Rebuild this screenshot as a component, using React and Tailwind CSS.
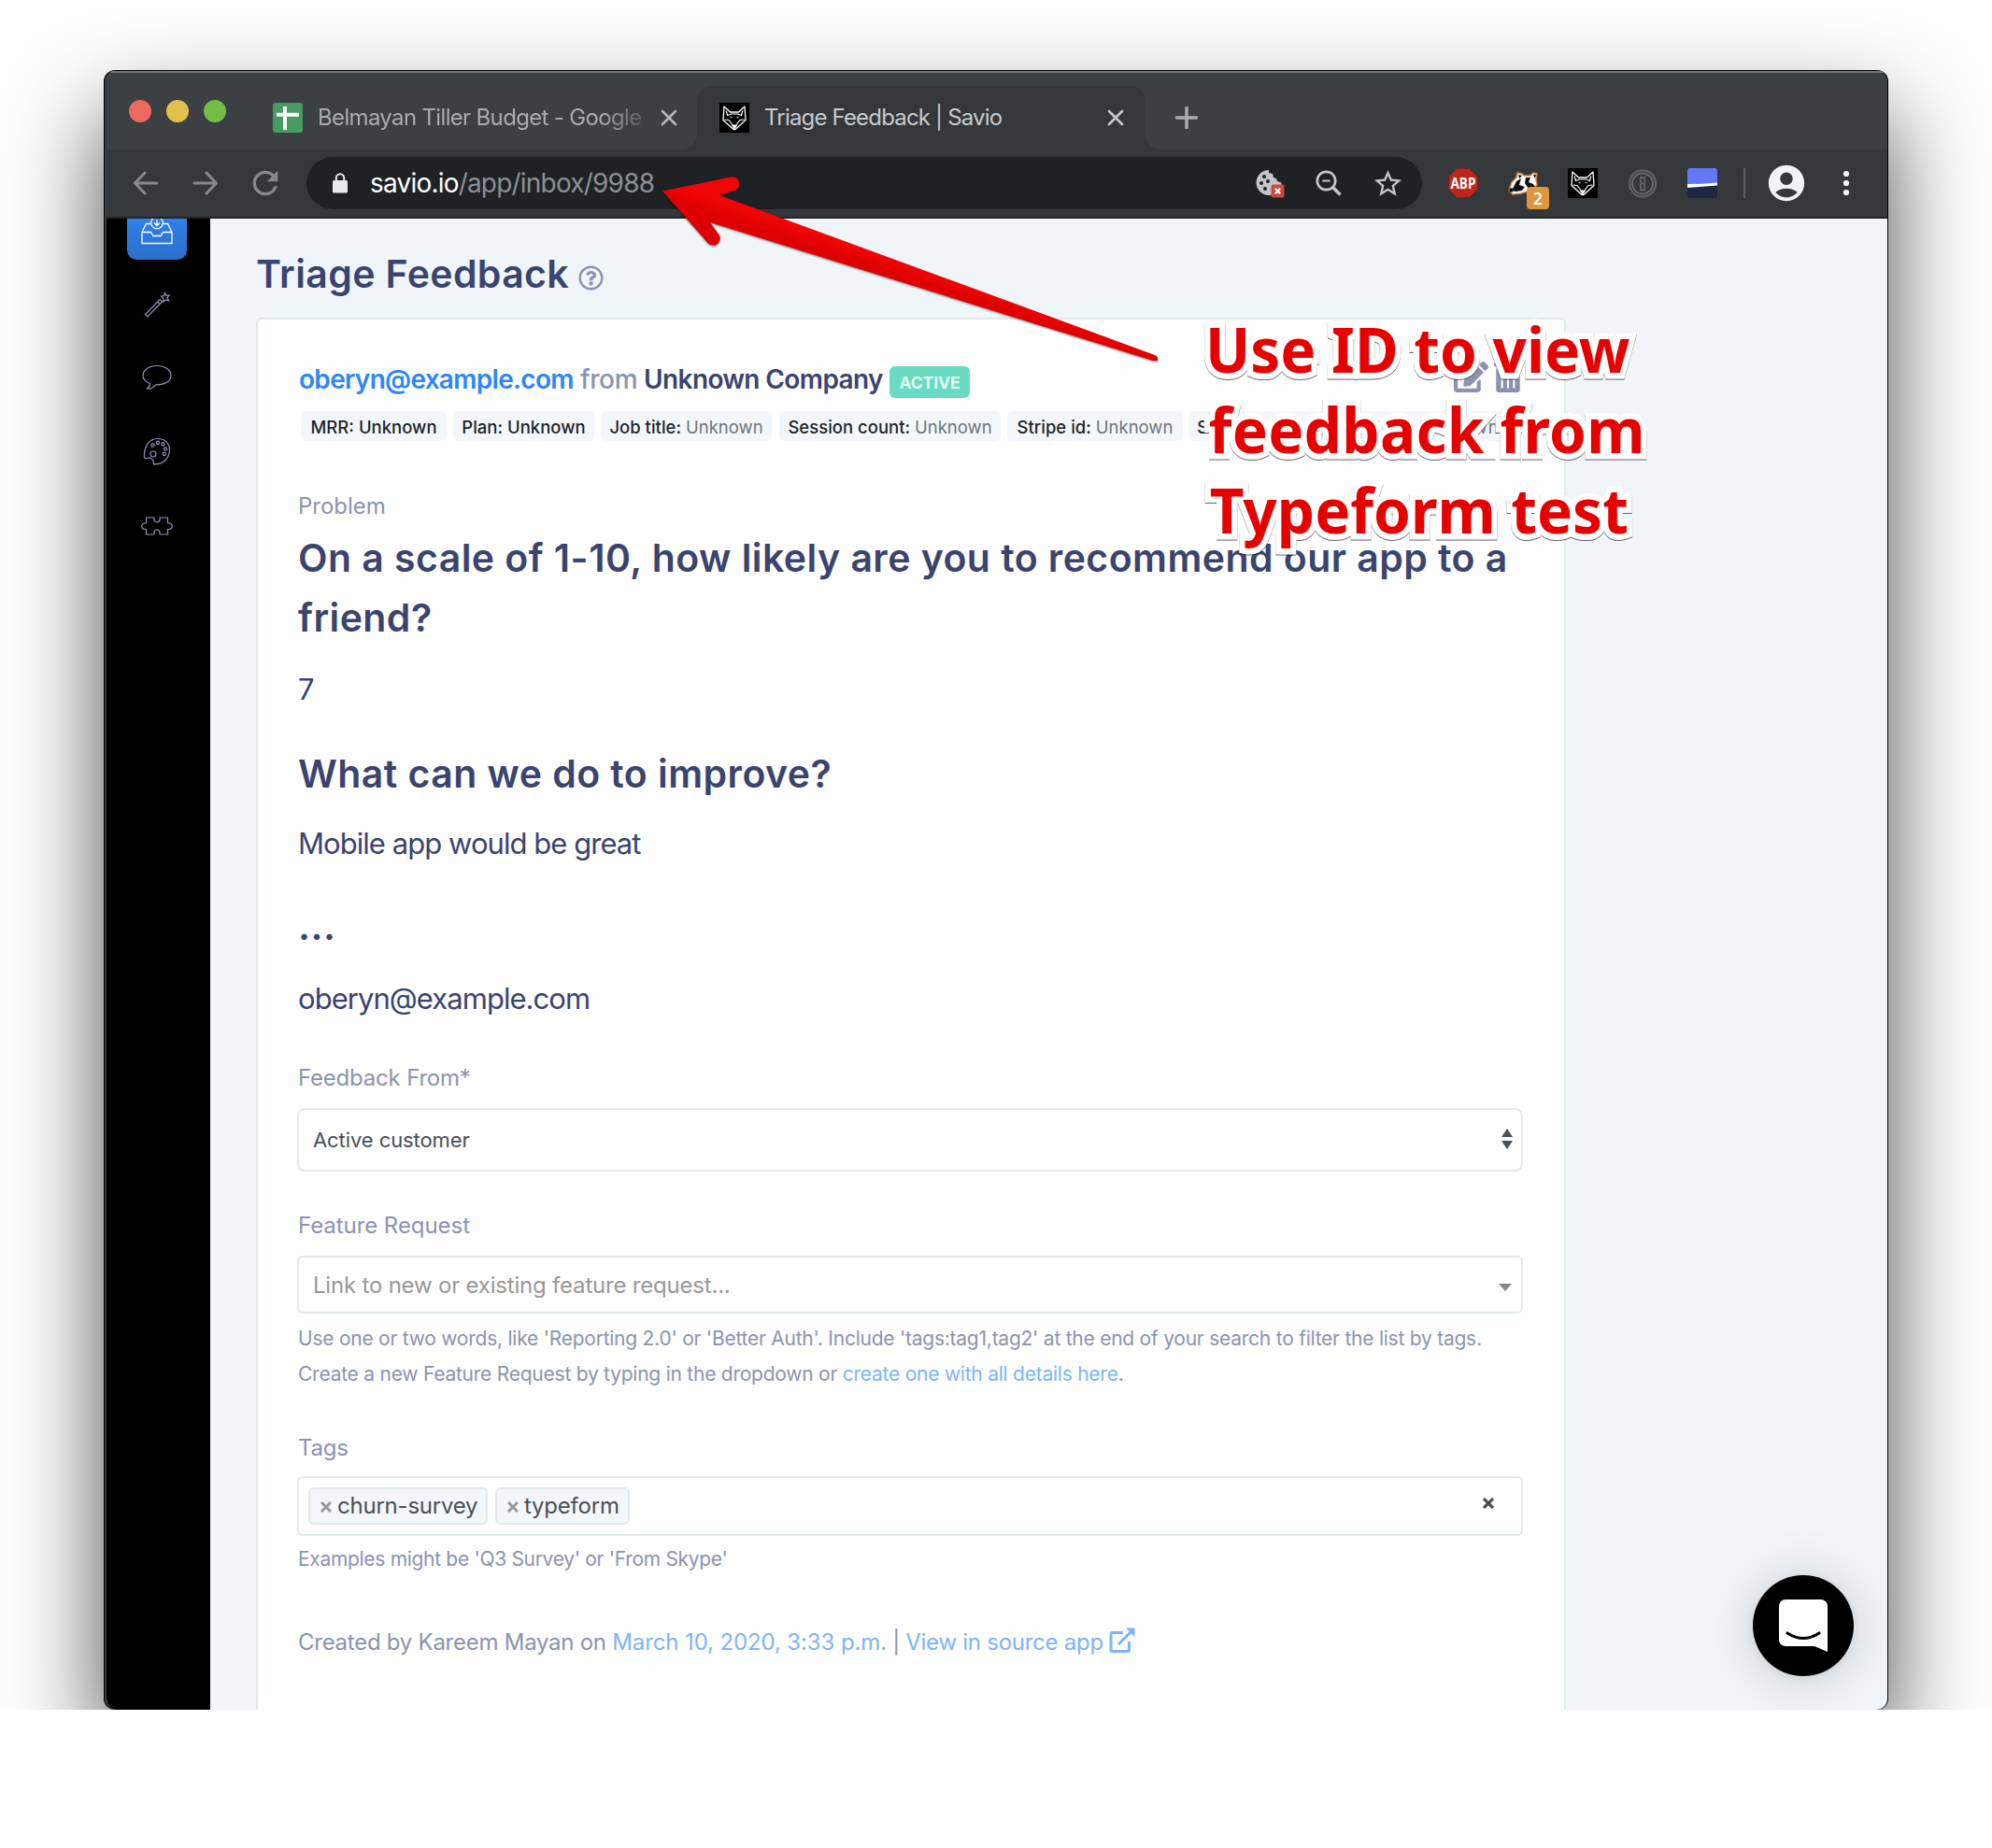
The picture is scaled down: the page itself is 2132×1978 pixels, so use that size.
import React from 'react';
import { MdRefresh, MdStarBorder, MdAccountCircle } from 'react-icons/md';
import { FaRegQuestionCircle, FaEdit, FaTrashAlt } from 'react-icons/fa';

function Fox({ className }) {
  return (
    <svg className={className} viewBox="0 0 32 32">
      <rect width="32" height="32" fill="#000" />
      <path d="M5 4 L11.500 10 H20.500 L27 4 L28 18.500 L17 28.500 H15 L4 18.500 Z" fill="none" stroke="#fff" strokeWidth="1.300" strokeLinejoin="round" />
      <path d="M7.200 8.500 L8.500 13.500 L12.500 12 H19.500 L23.500 13.500 L24.800 8.500 M5.500 18 L10 18.500 L14 23.500 M26.500 18 L22 18.500 L18 23.500" fill="none" stroke="#fff" strokeWidth="1.200" />
      <path d="M12.500 23.500 h7 L16 28.800 Z" fill="#fff" />
      <path d="M11.500 15.500 h2 M18.500 15.500 h2" stroke="#bbb" strokeWidth="1.500" />
    </svg>
  );
}

function CloseX({ className }) {
  return (
    <svg className={className} viewBox="0 0 18 18" fill="none" stroke="currentColor" strokeWidth="2.600" strokeLinecap="round">
      <path d="M2 2 L16 16 M16 2 L2 16" />
    </svg>
  );
}

function TabStrip() {
  return (
    <div className="flex h-[85px] shrink-0 items-end bg-[#3c4043] shadow-[inset_0_1px_0_#000,inset_0_3px_0_#70767a]">
      <div className="ml-[24px] mb-[29px] flex gap-4">
        <div className="size-6 rounded-full bg-[#ed6a5e]" />
        <div className="size-6 rounded-full bg-[#e1c04c]" />
        <div className="size-6 rounded-full bg-[#72be47]" />
      </div>
      <div className="ml-[50px] flex h-[68px] w-[454px] items-center">
        <svg className="size-8" viewBox="0 0 32 32">
          <rect width="32" height="32" rx="3" fill="#469b60" />
          <path d="M13 4 v25 M4 12.800 h24" stroke="#fff" strokeWidth="4" />
        </svg>
        <div className="ml-[16px] w-[352px] whitespace-nowrap text-[24px] tracking-[-0.660px] text-[#a9acae] [mask-image:linear-gradient(to_right,#000_86%,rgba(0,0,0,0.25)_99%)]">Belmayan Tiller Budget - Google</div>
        <CloseX className="ml-[15px] size-[18px] text-[#b4b8ba]" />
      </div>
      <div className="relative flex h-[68px] w-[480px] items-center rounded-t-2xl bg-[#35383b]">
        <div className="absolute -left-4 bottom-0 size-4 bg-[radial-gradient(circle_at_0_0,transparent_15.500px,#35383b_16px)]" />
        <div className="absolute -right-4 bottom-0 size-4 bg-[radial-gradient(circle_at_100%_0,transparent_15.500px,#35383b_16px)]" />
        <Fox className="ml-6 size-8" />
        <div className="ml-[16px] w-[367px] whitespace-nowrap text-[24px] tracking-[-0.820px] text-[#c8cacc]">Triage Feedback | Savio</div>
        <CloseX className="size-[18px] text-[#c6c9cb]" />
      </div>
      <svg className="mb-[22px] ml-[32px] size-6" viewBox="0 0 24 24" stroke="#aaaeb1" strokeWidth="3.400" strokeLinecap="round">
        <path d="M12 1.500 V22.500 M1.500 12 H22.500" />
      </svg>
    </div>
  );
}

function Toolbar() {
  return (
    <div className="flex h-[74px] shrink-0 items-center border-b-2 border-[#222427] bg-[#35383b]">
      <svg className="ml-[28px] h-[26px] w-[28px]" viewBox="0 0 28 26" fill="none" stroke="#85898b" strokeWidth="3" strokeLinecap="round" strokeLinejoin="round">
        <path d="M26 13 H3 M13 2 L2.500 13 L13 24" />
      </svg>
      <svg className="ml-[36px] h-[26px] w-[28px]" viewBox="0 0 28 26" fill="none" stroke="#85898b" strokeWidth="3" strokeLinecap="round" strokeLinejoin="round">
        <path d="M2 13 H25 M15 2 L25.500 13 L15 24" />
      </svg>
      <MdRefresh className="ml-[30px] size-[40px] text-[#85898b]" />
      <div className="ml-[24px] flex h-14 w-[1194px] items-center rounded-full bg-[#1f2225]">
        <svg className="ml-[28px] h-[22px] w-4" viewBox="0 0 16 22">
          <rect y="8" width="16" height="13.500" rx="1.500" fill="#e8eaed" />
          <path d="M3.800 9 V5.500 a4.200 4.200 0 0 1 8.400 0 V9" fill="none" stroke="#e8eaed" strokeWidth="2" />
        </svg>
        <div className="ml-[24px] w-[939px] whitespace-nowrap text-[28px] tracking-[-0.800px] text-[#8d9092]"><span className="text-white">savio.io</span>/app/inbox/9988</div>
        <svg className="ml-[9px] size-8" viewBox="0 0 32 32">
          <path d="M14 2 A13.500 13.500 0 1 0 27.500 15.500 L23 14 L22 11 L19 10 L18 6 L14 5 Z" fill="#c3c5c7" />
          <g fill="#1f2225"><circle cx="9" cy="9" r="2" /><circle cx="6" cy="16" r="2" /><circle cx="13" cy="14" r="2" /><circle cx="10" cy="22" r="2" /></g>
          <rect x="16.500" y="17.500" width="14" height="14" rx="2" fill="#c9493f" />
          <path d="M20.800 21.800 l5.400 5.400 m0 -5.400 l-5.400 5.400" stroke="#fff" strokeWidth="2" />
        </svg>
        <svg className="ml-[32px] size-[28px]" viewBox="0 0 28 28" fill="none" stroke="#c3c5c7" strokeWidth="2.700">
          <circle cx="11.500" cy="11.500" r="9.700" />
          <path d="M18.300 18.300 L26.500 26.500" strokeWidth="3.400" />
          <path d="M7.300 11.500 h8.400" strokeWidth="2" />
        </svg>
        <MdStarBorder className="ml-[32px] size-[35px] text-[#c3c5c7]" />
      </div>
      <div className="flex items-center">
        <svg className="ml-7 size-8" viewBox="0 0 32 32">
          <path d="M9.500 0.500 h13 l9 9 v13 l-9 9 h-13 l-9 -9 v-13 z" fill="#bb281b" stroke="#8a1d14" />
          <text x="16" y="21.500" textAnchor="middle" fontSize="15.500" fontWeight="700" fontFamily="Open Sans, sans-serif" fill="#fff" textLength="27" lengthAdjust="spacingAndGlyphs">ABP</text>
        </svg>
        <div className="relative ml-8 size-8">
          <svg className="size-8" viewBox="0 0 32 32" strokeLinejoin="round">
            <path d="M1 24 L4 15 L9 10 L10 5 L15 6 L17 8 H24 L27 5 L31 6 L30 12 L31 18 L24 24 L14 27 L5 28 Z" fill="#fff" stroke="#d98443" strokeWidth="1.500" />
            <path d="M4 24 L9 14 L14 11 L12 18 L18 20 L15 24 L8 25 Z M11 7 l4 1 -3 3z M19 10 H24 L22 15 L27 17 L29 20 L22 22 L18 16 Z M27 7 l3 0 -1 4z" fill="#111" />
            <circle cx="3.500" cy="23.500" r="2.200" fill="#111" />
          </svg>
          <div className="absolute left-5 top-5 flex size-6 items-center justify-center rounded-[4px] bg-[#de9641] font-['Open_Sans',sans-serif] text-[18px] font-semibold leading-none text-white">2</div>
        </div>
        <Fox className="ml-8 size-8" />
        <svg className="ml-8 size-8" viewBox="0 0 32 32" fill="none" stroke="#6f7274" strokeWidth="1.800">
          <circle cx="16" cy="16.500" r="14" stroke="#5c5f62" strokeWidth="2.500" /><circle cx="16" cy="16.500" r="11" strokeWidth="1.500" />
          <path d="M13.800 10 h4.400 v5 l-1.200 1.500 1.200 1.500 v5.500 h-4.400 v-5.500 l1.200 -1.500 -1.200 -1.500 z" strokeWidth="1.400" />
        </svg>
        <svg className="ml-8 size-8" viewBox="0 0 32 32">
          <path d="M3 0 h26 a3 3 0 0 1 3 3 v14 H0 V3 a3 3 0 0 1 3 -3z" fill="#6378f6" />
          <path d="M0 20 L32 18 V29 a3 3 0 0 1 -3 3 H3 a3 3 0 0 1 -3 -3 z" fill="#1f2740" />
          <path d="M0 17 Q16 17 32 15.500 V18.500 L0 21 Z" fill="#fff" />
        </svg>
        <div className="ml-[28px] h-8 w-0.5 bg-[#5b5e61]" />
        <MdAccountCircle className="ml-[21px] size-[46px] text-[#f1f3f4]" />
        <svg className="ml-[35px] h-[28px] w-[12px]" viewBox="0 0 12 28" fill="#f1f3f4">
          <circle cx="6" cy="4" r="3.100" /><circle cx="6" cy="14" r="3.100" /><circle cx="6" cy="24" r="3.100" />
        </svg>
      </div>
    </div>
  );
}

function Sidebar() {
  return (
    <div className="flex w-[111px] shrink-0 flex-col items-center bg-black pr-[3px]">
      <div className="flex h-11 w-[64px] justify-center rounded-b-[10px] bg-gradient-to-b from-[#2f80e8] to-[#2a70c8]">
        <svg className="h-[28px] w-[34px]" viewBox="0 0 34 28" fill="none" stroke="#fff" strokeWidth="1.300">
          <path d="M1 26.500 V14.500 H10.500 L13 18.500 H21 L23.500 14.500 H33 V26.500 Z M1 14.500 L5.500 5.500 H10 M24 5.500 H28.500 L33 14.500" />
          <circle cx="17" cy="4.500" r="6.300" />
          <path d="M17 1 V7.500 M14 4.500 L17 7.500 L20 4.500" />
        </svg>
      </div>
      <div className="flex flex-col items-center text-[#8f94b8]">
        <svg className="mt-[34px] h-[28px] w-[28px]" viewBox="0 0 28 28" fill="none" stroke="currentColor" strokeWidth="1.200">
          <path d="M1.500 24.500 L17 8.500 L19.500 11 L4 26.800 Z M14.500 11 L17 13.500 M22.500 1.500 L23.700 4.300 L27 4 L25 6.800 L26.500 9.800 L23.300 9 L20.800 11 L20.600 7.600 L18.500 5.200 L21.600 4.500 Z" />
        </svg>
        <svg className="mt-[50px] h-[28px] w-[32px]" viewBox="0 0 32 28" fill="none" stroke="currentColor" strokeWidth="1.200">
          <path d="M8.500 20.500 C3.500 18.500 1 15.500 1 12 C1 6 7.500 1.500 16 1.500 S31 6 31 12 S24.500 22 15 21.800 C12.500 24.500 9 26.500 5.500 26 C7.500 24.500 8.500 22.500 8.500 20.500 Z" />
        </svg>
        <svg className="mt-[50px] h-[30px] w-[30px]" viewBox="0 0 30 30" fill="none" stroke="currentColor" strokeWidth="1.200">
          <path d="M1.500 22 C0.500 11 6 1.500 16 1.500 C24 1.500 28.500 7 28.500 13.500 C28.500 23 20.500 29.500 11.500 28.800 C12 25 9.500 21.500 6 22.300 C4.500 22.700 3 22.700 1.500 22 Z" />
          <circle cx="11" cy="18" r="3" /><circle cx="10.500" cy="8.500" r="1.600" /><circle cx="16" cy="5.800" r="1.600" /><circle cx="21.500" cy="7.200" r="1.600" /><circle cx="24" cy="12.500" r="1.600" /><circle cx="22.800" cy="18" r="1.600" />
        </svg>
        <svg className="mt-[54px] h-[22px] w-[34px]" viewBox="0 0 34 22" fill="none" stroke="currentColor" strokeWidth="1.200">
          <path d="M5.500 2 H14 V4 a3 3 0 0 0 6 0 V2 H28.500 V8 H30 a3 3 0 0 1 0 6.500 H28.500 V20 H20 V18 a3 3 0 0 0 -6 0 V20 H5.500 V14.500 H4 a3 3 0 0 1 0 -6.500 H5.500 Z" />
        </svg>
      </div>
    </div>
  );
}

function Chip({ label, value, muted = true, className }) {
  return (
    <div className={`flex h-8 items-center justify-center whitespace-nowrap rounded-md bg-[#f3f7fb] pt-[3px] text-[18.500px] font-medium text-[#212529] ${className}`}>
      <span>{label}: <span className={muted ? 'font-normal text-[#6c757d]' : ''}>{value}</span></span>
    </div>
  );
}

function Tag({ children, className }) {
  return (
    <div className={`flex h-10 items-center rounded-md border-2 border-[#e1e9e9] bg-[#f3f7fb] pl-[11px] text-[24px] tracking-[-0.220px] text-[#495057] ${className}`}>
      <svg className="mr-[6px] mt-[2px] size-3 shrink-0" viewBox="0 0 12 12" stroke="#999" strokeWidth="3"><path d="M1 1 L11 11 M11 1 L1 11" /></svg>
      {children}
    </div>
  );
}

function Label({ children, className }) {
  return <div className={`h-9 pl-px text-[24px] leading-[38px] ${className}`}><span>{children}</span></div>;
}

function Question({ children, className }) {
  return <h2 className={`whitespace-nowrap pl-px text-[41px] font-semibold leading-[64px] tracking-[0.440px] text-[#3a446f] ${className}`}>{children}</h2>;
}

function Answer({ children, className }) {
  return <p className={`h-10 pl-px text-[31px] leading-[41px] tracking-[-0.950px] text-[#3a446f] ${className}`}><span>{children}</span></p>;
}

function Card() {
  return (
    <div className="flex w-[1402px] grow flex-col rounded-t-md border-2 border-b-0 border-[#e1e9e9] bg-[#fefefe] pl-[42px] pr-[44px] text-[#8c93b0]">
      <div className="mt-[46px] flex h-9 items-center whitespace-nowrap text-[28px] font-semibold leading-9 tracking-[-0.690px]">
        <div className="ml-[2px] w-[301px] text-[#2f86f6]">oberyn@example.com</div>
        <div className="w-[68px] font-medium tracking-[-0.400px]">from</div>
        <div className="w-[263px] tracking-[-0.600px] text-[#3a446f]">Unknown Company</div>
        <div className="mt-[6px] flex h-[34px] w-[86px] items-center justify-center rounded-md bg-[#68dbc0] pt-px text-[17.500px] font-bold tracking-[-0.100px] text-[#e2faf4]">ACTIVE</div>
        <FaEdit className="-mt-[5px] ml-auto size-[37px]" />
        <FaTrashAlt className="-mt-[6px] ml-[6px] mr-[1px] h-[34px] w-[30px]" />
      </div>
      <div className="ml-1 mt-4 flex">
        <Chip className="w-[156px]" label="MRR" value="Unknown" muted={false} />
        <Chip className="ml-[7px] w-[151px]" label="Plan" value="Unknown" muted={false} />
        <Chip className="ml-[7px] w-[183px]" label="Job title" value="Unknown" />
        <Chip className="ml-[8px] w-[237px]" label="Session count" value="Unknown" />
        <Chip className="ml-[7px] w-[188px]" label="Stripe id" value="Unknown" />
        <Chip className="ml-[6px] w-[342px] tracking-[0.900px]" label="Subscription started at" value="Unknown" />
      </div>
      <Label className="mt-[51px]">Problem</Label>
      <Question className="mt-[6px]">On a scale of 1-10, how likely are you to recommend our app to a<br />friend?</Question>
      <Answer className="mt-6">7</Answer>
      <Question className="mt-[39px]">What can we do to improve?</Question>
      <Answer className="mt-[22px]">Mobile app would be great</Answer>
      <Question className="mt-[37px]">...</Question>
      <Answer className="mt-[25px]">oberyn@example.com</Answer>
      <Label className="mt-[47px] tracking-[-0.200px]">Feedback From*</Label>
      <div className="mt-[15px] flex h-[68px] items-center justify-between rounded-lg border-2 border-[#e1e9e9] pl-[15px] pr-[9px] text-[22px] tracking-[-0.080px] text-[#495057]">
        <span>Active customer</span>
        <svg className="mb-[2px] h-[22px] w-3" viewBox="0 0 12 22" fill="#495057"><path d="M6 0 L12 9 H0 Z M0 13 H12 L6 22 Z" /></svg>
      </div>
      <Label className="mt-[39px] tracking-[-0.060px]">Feature Request</Label>
      <div className="mt-[15px] flex h-[62px] items-center justify-between rounded-md border-2 border-[#e1e9e9] pl-[15px] pr-[10px] text-[24px] tracking-[-0.200px] text-[#999]">
        <span className="pt-px">Link to new or existing feature request...</span>
        <svg className="mt-[5px] h-[8px] w-[14px]" viewBox="0 0 14 8" fill="#888"><path d="M0 0 H14 L7 8 Z" /></svg>
      </div>
      <div className="mt-[8px] whitespace-nowrap pl-px text-[21px] leading-[38px] tracking-[-0.240px]">
        <div><span>Use one or two words, like 'Reporting 2.0' or 'Better Auth'. Include 'tags:tag1,tag2' at the end of your search to filter the list by tags.</span></div>
        <div>Create a new Feature Request by typing in the dropdown or <span className="text-[#7db4fb]">create one with all details here</span>.</div>
      </div>
      <Label className="mt-[41px] tracking-[-0.200px]">Tags</Label>
      <div className="mt-[13px] flex h-16 items-center rounded-md border-2 border-[#e1e9e9] pl-[10px]">
        <Tag className="w-[192px]">churn-survey</Tag>
        <Tag className="ml-2 w-[144px]">typeform</Tag>
        <svg className="mb-[6px] ml-auto mr-[29px] size-3" viewBox="0 0 12 12" stroke="#495057" strokeWidth="3.200"><path d="M1 1 L11 11 M11 1 L1 11" /></svg>
      </div>
      <div className="mt-[6px] pl-px text-[21px] leading-[38px] tracking-[-0.310px]"><span>Examples might be 'Q3 Survey' or 'From Skype'</span></div>
      <div className="mt-[52px] flex h-9 whitespace-pre pl-px text-[24px] leading-9 tracking-[-0.260px]">
        <span>Created by Kareem Mayan on </span><span className="tracking-[-0.120px] text-[#7db4fb]">March 10, 2020, 3:33 p.m.</span><span className="tracking-[-0.400px]"> | </span><span className="text-[#7db4fb]">View in source app</span>
        <svg className="ml-[6px] mt-[2px] size-7" viewBox="0 0 28 28" fill="none" stroke="#7db4fb" strokeWidth="3">
          <path d="M15 5.500 H3.500 a1.500 1.500 0 0 0 -1.500 1.500 V24 a1.500 1.500 0 0 0 1.500 1.500 H20 a1.500 1.500 0 0 0 1.500 -1.500 V15 M10 18 L25 3" />
          <path d="M18 0.500 H27.500 V10 Z" fill="#7db4fb" stroke="none" />
        </svg>
      </div>
    </div>
  );
}

function Annotation() {
  return (
    <>
      <svg className="absolute left-[700px] top-[180px] h-[220px] w-[560px] drop-shadow-[0_1px_1px_rgba(0,0,0,0.5)]" viewBox="700 180 560 220">
        <defs>
          <linearGradient id="arrow" gradientUnits="userSpaceOnUse" x1="880" y1="240" x2="868" y2="276">
            <stop offset="0.300" stopColor="#f20505" /><stop offset="0.700" stopColor="#dc0000" />
          </linearGradient>
        </defs>
        <path d="M709 204.500 L783 189.300 A7.700 7.700 0 0 1 787.500 203.500 L770 209 L1237 380.500 Q1240 382.500 1239 386 L1234 386 L760 238 L770 252 A7.500 7.500 0 0 1 757.500 260 Z" fill="url(#arrow)" />
      </svg>
      <div className="absolute left-[1290px] top-[330px] origin-left scale-x-[0.953] whitespace-nowrap font-['Noto_Sans',sans-serif] text-[67px] font-bold leading-[86px] text-[#e60000] [-webkit-text-stroke:13px_white] [paint-order:stroke_fill] [stroke-linejoin:round] drop-shadow-[0_1px_0.5px_rgba(0,0,0,0.6)]">
        <div><span>Use ID to view</span></div>
        <div className="ml-[4px] tracking-[0.300px]"><span>feedback from</span></div>
        <div className="ml-[5px]"><span>Typeform test</span></div>
      </div>
    </>
  );
}

export default function App() {
  return (
    <div className="h-[1978px] w-[2132px] overflow-hidden bg-[#fefefe] font-['Inter',sans-serif]">
      <div className="relative h-[1830px] overflow-hidden pl-[111px] pt-[75px]">
        <div className="h-[1755px] w-[1910px] rounded-xl bg-black pl-px pr-px shadow-[0_50px_100px_rgba(0,0,0,0.700)]">
          <div className="flex h-full flex-col overflow-hidden rounded-xl border-l-2 border-[#3a3a3a] bg-black">
            <TabStrip />
            <Toolbar />
            <div className="flex min-h-0 grow bg-[#f0f5f9]">
              <Sidebar />
              <div className="flex grow flex-col pl-[49px]">
                <div className="flex h-[106px] shrink-0 items-center pt-[14px]">
                  <h1 className="whitespace-nowrap text-[41px] font-semibold tracking-[0.370px] text-[#3a446f]">Triage Feedback</h1>
                  <FaRegQuestionCircle className="ml-[10px] mt-[7px] size-[27px] text-[#8c93b0]" />
                </div>
                <Card />
              </div>
            </div>
          </div>
        </div>
        <div className="absolute left-[1876px] top-[1686px] flex size-[108px] items-center justify-center rounded-full bg-black shadow-[0_4px_60px_rgba(0,0,0,0.160),0_2px_12px_rgba(0,0,0,0.080)]">
          <svg className="h-14 w-[52px]" viewBox="0 0 52 56">
            <path d="M7 0 H45 a7 7 0 0 1 7 7 V56 L38 50 H7 a7 7 0 0 1 -7 -7 V7 a7 7 0 0 1 7 -7z" fill="#fff" />
            <path d="M9 36 Q26 47 43 36" fill="none" stroke="#000" strokeWidth="3.200" strokeLinecap="round" />
          </svg>
        </div>
        <Annotation />
      </div>
    </div>
  );
}
